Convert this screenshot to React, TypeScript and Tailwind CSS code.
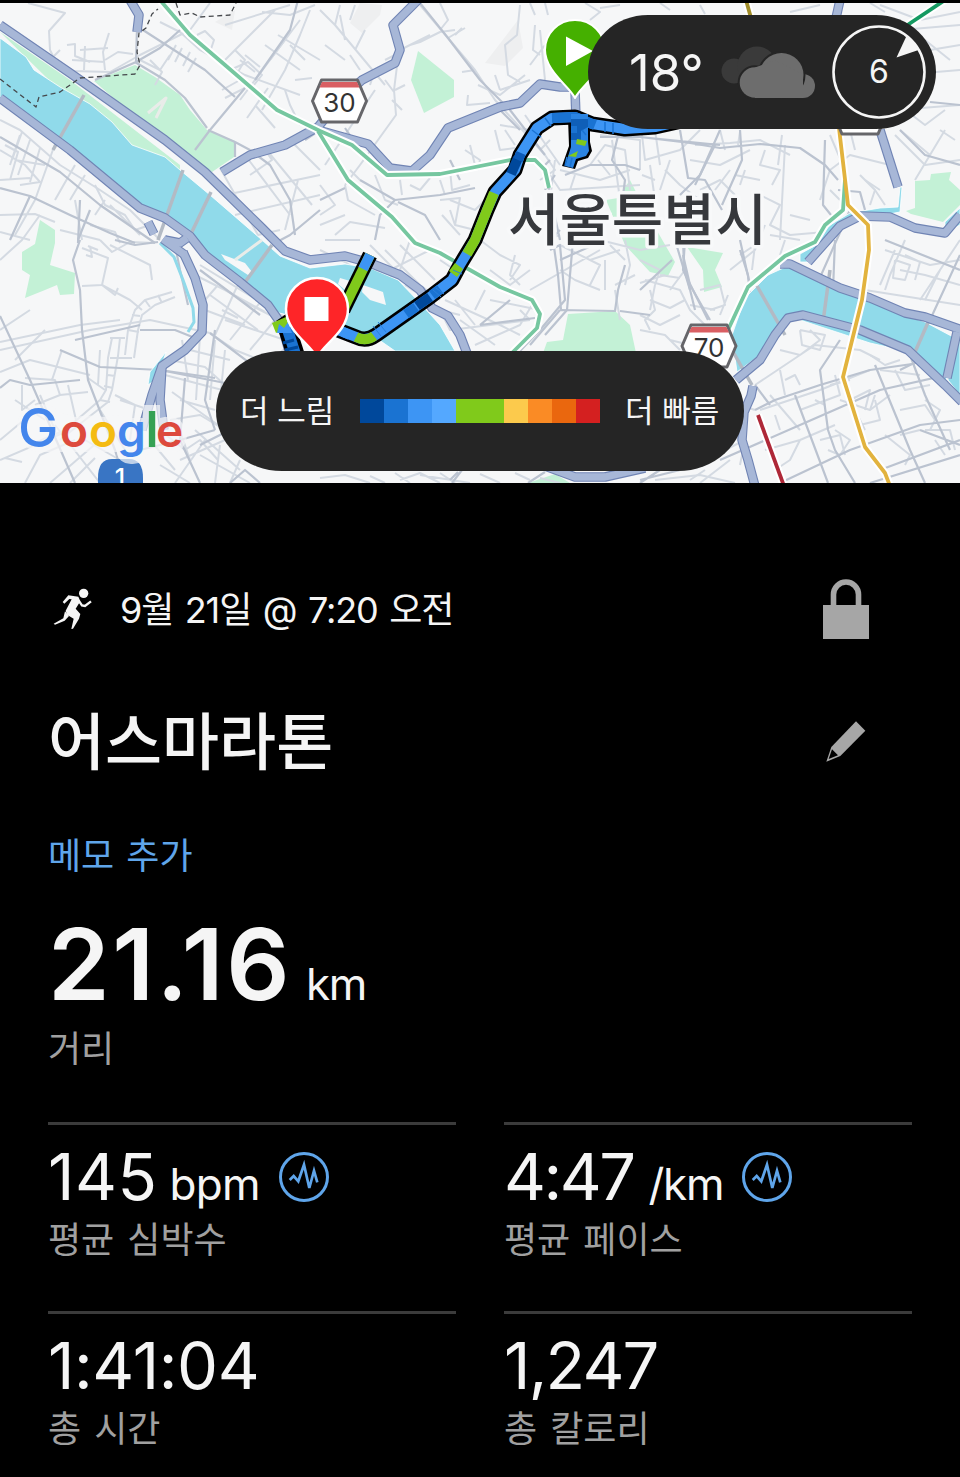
import React from 'react';

type Segment = { d: string; color: string };

type StatProps = {
  value: string;
  valueClass: string;
  unit?: string;
  unitClass?: string;
  label: string;
  chart?: boolean;
};

const MINOR_ROADS = [
  'M28 3L65 13L49 31L50 50L55 60L72 71L110 72L140 55L190 30L210 3',
  'M67 45L75 44L75 56L90 62M80 50L108 48M109 33L103 52L105 70M72 60L105 62M85 46L84 70M48 62L60 50M105 60L118 52L133 54',
  'M160 22L180 32L200 50L245 75L300 95M170 55L160 70L140 60M150 60L162 72L155 85M176 45L168 60M182 48L175 62M190 52L183 66M196 58L188 72',
  'M197 35L205 31L214 40L210 52M225 25L290 5M225 60L250 35L275 10M235 50L245 60L238 72M262 12L290 15L315 5M310 10L300 35L285 70L262 110M278 35L320 60',
  'M230 70L248 62L262 75L250 90M247 118L268 88M255 105L275 128M285 90L290 105L300 125M295 80L312 78M265 45L300 70M300 20L270 60L240 100',
  'M222 90L240 80M225 98L245 88M270 60L285 40M290 45L305 60M240 60L255 72M245 55L260 67',
  'M220 168L258 235L280 230M245 155L290 215M265 148L312 205M290 140L320 170M225 195L320 175M235 215L320 195M228 190L265 235M298 180L285 230M250 175L272 160L265 150',
  'M0 120L20 130L60 165L100 190L130 210L160 240M0 150L25 165L40 182L20 185M5 145L18 152L10 180M20 135L10 165M30 140L18 175M40 148L30 182M0 180L30 178M15 160L45 165M22 132L12 160',
  'M60 130L35 200L15 235M75 165L55 200M85 175L70 200M95 185L105 205L125 215L135 230L150 225M0 215L35 214L55 222M60 230L100 240M90 225L115 232L120 243M105 200L95 215M110 205L140 235',
  'M0 232L30 240M75 200L82 240M0 260L22 240L40 215M100 240L112 252L130 242L155 243M82 248L108 258L102 285L82 286M88 246L98 250M86 255L92 257L90 246',
  'M102 285L115 295L118 288M110 245L150 265L152 280M102 285L130 300L142 310M0 350L90 330L150 320L210 333M0 342L80 325L120 320',
  'M0 330L30 310M15 360L45 330M0 372L30 360L90 375M25 378L55 380L60 395L88 392M35 405L60 395M22 385L22 410L35 400M52 380L62 350M68 385L76 420M88 378L105 390M100 350L98 385',
  'M110 338L125 338M112 338L108 358L106 390L100 400L65 430L30 445M120 338L118 356L112 390L108 402L85 420L60 440M110 358L132 358M108 375L115 376M104 386L113 388M100 400L110 402',
  'M125 355L128 330L135 310L145 300L172 292M134 358L138 330L142 315L155 305L175 297M128 330L139 332M132 315L140 316M145 300L150 307M158 295L162 303',
  'M0 460L70 430M25 483L40 455L75 440M50 483L100 440M70 483L95 458M0 440L30 415M5 458L22 462M15 400L45 420M40 395L55 430M55 425L100 483',
  'M115 395L135 405L130 440M120 400L150 410M100 410L125 450M85 440L120 460',
  'M195 275L225 290L265 312M200 265L290 320L290 345L270 360M215 335L240 280M205 310L245 325M218 285L205 300M230 340L262 300M250 350L275 320M210 295L258 330M225 320L285 340M240 300L270 315M222 310L238 318',
  'M170 360L205 367L225 385M165 375L230 392M210 333L235 350L260 360M182 340L188 380M200 335L196 400M190 350L230 360M180 400L215 410M172 392L225 430M215 340L210 400M225 350L218 420',
  'M170 420L200 415L225 430M160 430L185 450L200 440L218 460M150 440L175 470M178 425L190 460M195 430L240 470M180 460L225 440M200 455L250 483M160 465L190 483M205 440L175 483M220 445L215 483M240 460L230 483',
  'M320 10L335 25L340 5M335 25L385 85M340 15L345 40M355 5L350 20M365 30L355 50M375 70L370 85M325 45L345 60M350 55L360 70',
  'M410 45L420 42L440 32L455 30M430 35L400 50M398 58L394 90L396 115L360 165L345 185M392 100L402 110M455 35L462 28M395 90L405 85M395 55L385 60M385 80L394 92',
  'M375 90L345 135L362 150M345 135L325 165M420 5L448 38L475 70L495 100L545 155M440 30L448 20L440 3M448 38L465 28M495 75L500 90M475 70L462 72M468 95L467 105L490 103',
  'M520 5L517 35L505 45L508 75L520 82M535 25L533 50L540 55M545 45L530 65M500 90L530 80M478 85L500 95L525 75M540 30L545 80',
  'M320 185L335 205L320 215M345 185L348 200L375 215M350 170L360 180M375 175L385 200L398 205M400 180L402 195M335 235L350 222L385 228M320 225L345 215M325 240L360 240',
  'M410 185L420 190L430 178M440 180L445 195M450 170L452 190L470 185M465 150L480 160L478 170M470 145L475 165M440 200L460 198L455 225L475 230M455 225L450 210M442 215L460 235M450 200L475 210L490 195',
  'M500 125L530 130L535 145M495 130L500 150L515 148M515 145L505 130M525 115L560 165M550 140L540 150M545 155L555 170L540 180',
  'M585 3L600 12L590 20M530 3L535 15M545 3L548 15M600 8L620 5M660 3L670 10M700 5L705 14',
  'M550 175L560 190L640 185M555 160L550 200M560 170L600 180L630 170M590 165L605 145L625 150L630 190M598 160L610 175M612 140L620 200M575 175L570 190M600 135L640 140L640 170',
  'M642 135L645 160L680 150L700 130M655 130L660 165M690 160L720 165L750 150M695 145L730 143L760 140L790 155M765 150L760 165L780 170L772 185M778 165L782 135M720 130L725 150M740 132L738 145',
  'M665 170L680 185L700 200M642 175L655 180M700 190L720 180L735 195M715 190L730 170M735 175L760 180M745 170L740 185M785 145L780 240M650 165L655 200M670 160L660 190',
  'M820 200L830 170L850 155L870 160L890 165M850 130L855 150M830 135L845 170M860 175L875 190L870 205M900 130L930 155L915 180M895 135L925 165L960 160M930 155L945 130M912 115L925 125L945 110M895 110L960 105M940 130L955 140',
  'M900 75L960 70M905 82L915 92L910 100M875 190L885 205M830 190L840 200M880 190L865 180M760 195L780 205L770 225L790 235L825 232',
  'M765 225L755 250L730 270M785 240L780 255M770 235L800 240M790 215L810 220M740 255L755 245L752 270M650 290L655 310L645 320L650 330',
  'M320 250L345 262L380 285L400 270M410 240L400 270L440 300M385 250L425 290M400 245L435 280M390 270L430 250M370 245L400 275M440 260L455 270',
  'M405 285L420 295L440 310L460 315M445 300L500 325L520 335M460 320L495 345M475 345L520 325L535 300M440 310L450 330L530 320M455 300L475 325M490 300L540 310M520 310L530 320M485 290L475 310',
  'M480 240L500 255L520 265L510 280M490 270L510 285L530 270M515 255L510 275L520 285M545 240L560 235M560 245L600 265L590 285M605 260L605 290M610 245L625 260M560 270L575 280L600 290M530 290L600 250',
  'M600 240L640 250L670 245M590 260L620 250M615 290L620 320M625 240L630 265L625 285M615 285L635 275',
  'M645 280L680 290L690 310L705 325M640 315L660 325L680 315M650 300L670 308L685 300M655 285L650 310M670 290L685 270M660 275L680 278M700 290L720 285L725 305L710 310M720 315L728 295',
  'M640 260L660 270L655 285M640 283L665 275M640 330L665 335L680 350M690 305L715 310M670 340L690 345',
  'M755 385L815 345L860 350L880 360M770 395L800 430M780 350L800 355L820 340L810 330M800 330L825 335L820 350L802 345L800 330M785 380L795 375L800 385M760 410L820 390L870 370M780 370L785 395',
  'M775 415L780 430M755 410L740 405M800 410L840 395L835 375M815 400L825 405M830 385L850 380M840 400L870 410L890 395M850 400L870 390L865 410M855 410L865 430',
  'M765 450L800 440L835 425M800 440L790 460L775 470M835 430L850 440L840 455L828 450M820 440L840 435L845 455M875 400L880 420L860 425M870 410L875 395M880 370L920 375M870 355L885 365L900 360',
  'M895 370L905 390L930 385M900 410L925 405L935 420M925 400L940 410L930 430M885 435L910 455L905 465M935 440L945 455M925 430L950 430L955 450M900 435L920 430M900 270L925 275L960 285M865 290L960 305',
  'M905 240L890 275L885 290M895 260L910 265L905 280L893 278L895 260M905 255L920 262L915 280M885 250L930 265L960 260M920 300L960 240M880 285L895 250M940 270L925 300',
  'M320 478L345 475L370 483M370 476L385 483M400 480L420 473L440 483M395 473L410 483M420 475L470 483M440 473L455 483M480 474L500 483M515 473L530 480M540 478L560 483M655 480L700 475L735 483',
  'M715 455L745 440L740 465M700 483L730 460M690 480L705 470M880 5L920 20L960 12M870 3L885 12M790 12L820 5M900 30L960 25M925 40L950 60M905 60L930 50L960 45',
];

const MAJOR_ROADS = [
  'M137 28L136 62L95 80M136 62L160 48L180 30M143 30L205 70L235 97M298 0L290 30L255 80M245 88L210 130L195 150M208 130L235 142L250 150',
  'M135 62L165 80L185 98L207 128M235 142L235 157',
  'M0 137L60 172L100 205L155 243M0 188L30 196L70 215L110 233L135 243M30 196L10 240M80 200L78 243M250 150L270 165L290 200L295 235M320 210L290 235L275 243',
  'M80 240L73 260L80 290L82 330L88 380L115 450L125 483M0 316L30 380L75 483M0 388L10 380L30 385L80 380M75 340L140 325M140 330L175 330L200 340',
  'M90 210L78 240M115 240L135 245L158 242M60 350L100 367L160 370L215 378M200 270L260 315M175 245L180 270L188 305M185 378L180 440L200 483M200 445L230 430',
  'M160 370L225 383M215 330L205 400L215 430M140 450L180 440L215 430M230 483L245 470L260 483',
  'M420 3L448 38L480 80L510 110L545 155M360 180L395 200L440 195L475 188M395 200L380 215L375 240M398 202L425 215L440 240M320 200L345 188',
  'M320 130L305 140M345 128L360 150L375 165M450 160L460 180M500 110L520 130',
  'M600 137L640 137L690 143L720 148L760 144L800 148L825 165L838 180M620 128L612 160L625 180L620 220M640 137L720 145M565 175L590 165L625 165L640 170M680 130L688 178L705 180L722 210M740 130L742 160L722 205M695 185L715 145',
  'M825 140L823 205L835 220M838 190L860 192L865 210M900 130L925 155L960 165M930 102L960 105M720 130L700 175L680 195',
  'M555 175L545 190M560 240L548 185M550 160L540 170M683 240L684 265L695 310M550 240L560 230M672 260L640 290',
  'M546 240L548 230M550 250L560 245L565 300L540 330L520 351M553 240L558 275L561 310M573 240L567 310L545 335M683 255L690 285L710 320M740 250L748 275L750 295M675 240L690 290',
  'M600 242L560 260M560 310L615 311L618 290L625 265M620 311L650 315M510 300L480 325M480 325L535 318M560 310L530 345',
  'M685 240L683 270L708 320M740 240L750 285M755 410L775 400L820 385L870 370L912 364L960 350M755 385L770 405M720 460L800 425L880 390L960 372',
  'M780 483L850 450L920 425L960 420M795 395L828 483M840 340L820 370L828 430L835 450L855 483M870 300L860 330M910 355L925 395L950 450M875 365L910 450L925 483M885 240L960 270M912 364L900 370M920 430L960 445M835 240L833 290L828 320',
  'M880 470L960 440M870 483L960 455M960 255L930 320L915 350M640 483L660 470M810 300L850 210M640 480L700 465',
  'M450 480L458 472M452 483L462 470M528 483L545 472M210 333L285 390',
];

const WATER = [
  'M0 38L26 57L34 70L60 87L90 104L112 122L132 145L165 157L180 170L210 195L262 240L280 256L310 268L345 264L370 268L398 280L420 303L440 325L455 351L395 351L372 335L345 330L318 322L275 312L230 278L192 240L140 205L70 150L0 98Z',
  'M737 372L732 335L745 298L768 275L790 265L830 283L860 297L905 315L925 322L955 338L946 380L910 352L870 343L800 320L788 316L775 335L760 355Z',
  'M955 345L960 340V395L948 380Z',
  'M815 242L830 225L850 213L880 208L898 207L900 187L902 187L900 212L862 219L835 232L818 250Z',
  'M158 362L150 372L148 385L158 378L166 352Z',
  'M800 254L818 244L812 262L800 262Z',
  'M945 222L960 208V225L945 232Z',
];

const STREAM = 'M160 243L174 257L183 280L193 308L194 322L188 332';

const PARKS = [
  'M0 32L70 80L180 165L180 172L100 130Z',
  'M94 81L135 65L155 77L180 95L190 110L207 130L235 141L234 157L212 172L198 165L150 130Z',
  'M418 51L454 80L454 97L424 113L411 80Z',
  'M915 181L930 180L931 174L951 172L949 180L960 190V205L943 222L911 214L906 211L915 208Z',
  'M35 244L40 220L55 230L55 243L50 265L75 273L74 294L60 295L57 285L45 290L25 298L30 275L22 270L22 252Z',
  'M606 200L618 198L630 180L640 200L660 236L675 262L668 276L650 272L625 245Z',
  'M687 247L723 253L715 270L722 287L704 292L703 270Z',
  'M568 314L615 311L630 325L636 353H543L547 342L563 340Z',
  'M528 483L555 474L570 483Z',
];

const HIGHWAYS = [
  'M0 25L70 73L90 87L165 140L205 172L262 228L285 251L310 260L345 256L370 263L400 275L420 290L432 308L448 316L460 335L468 356',
  'M0 98L70 150L140 208L165 218L190 236L205 255L240 282L268 305L282 325L290 355',
  'M130 0L139 15L137 32',
  'M183 252L195 278L203 305L202 332L185 350L162 366L152 395L142 430',
  'M162 366L160 400L164 430',
  'M163 239L185 255',
  'M148 222L154 234M165 240L180 243L187 238',
  'M418 0L393 25L400 50L395 63L362 80L340 100L318 127L285 145L250 155L222 172',
  'M318 130L368 144L390 168L412 171L430 155L448 128L500 107L520 103L540 84L560 87L575 87',
  'M840 0L836 18',
  'M880 130L898 187',
  'M808 262L840 226L860 216L890 217L915 228L945 233L960 215',
  'M780 264L790 264L840 288L870 298L905 313L925 317L962 330',
  'M736 380L760 360L775 335L788 318L803 315L860 330L908 350L945 385L962 402',
  'M957 332L947 378',
  'M753 386L751 396L744 412L742 440L748 460L755 486',
  'M545 466L575 477L605 477L645 468',
  'M575 90L576 118',
];

const BRIDGES = ['M84 95L53 150', 'M183 170L158 240', 'M211 192L188 240', 'M272 245L243 285', 'M757 286L785 335', 'M830 270L823 322', 'M930 318L915 352', 'M732 350L752 385'];

const TRANSIT_LINES: Segment[] = [
  { d: 'M160 0L190 35L225 65L277 110L320 131L352 145L387 175L440 174L510 160L535 160L545 170L549 188', color: '#76c7a0' },
  { d: 'M318 131L348 180L392 217L415 243L440 253L470 270L500 287L532 300L540 314L537 328L512 353', color: '#76c7a0' },
  { d: 'M845 180L843 210L825 225L815 242L785 256L748 287L728 330', color: '#76c7a0' },
  { d: 'M945 0L900 30', color: '#159a62' },
  { d: 'M746 0L751 18', color: '#a08c28' },
  { d: 'M839 128L848 205L868 225L869 250L862 300L843 377L865 447L885 473L890 486', color: '#e2b33e' },
  { d: 'M758 415L784 486', color: '#ae2838' },
];

const ROUTE =
  'M682 121L655 127L625 129L592 124L575 117L552 118L537 128L520 155L515 170L495 192L487 210L475 240L460 265L452 280L430 297L376 335Q366 342 356 337L338 330';

const ROUTE_SEGMENTS: Segment[] = [
  { d: 'M595 125L575 117L552 118', color: '#1a73d2' },
  { d: 'M518 158L511 174', color: '#00489b' },
  { d: 'M521 153L518 160', color: '#0c5bb8' },
  { d: 'M494 193L487 210L475 240L467 254', color: '#80ca1b' },
  { d: 'M459 266L453 274', color: '#80ca1b' },
  { d: 'M440 289L432 295', color: '#1a73d2' },
  { d: 'M430 297L417 306', color: '#00489b' },
  { d: 'M416 307L406 314', color: '#1a73d2' },
  { d: 'M374 336Q366 342 356 337', color: '#80ca1b' },
];

const PACE_SCALE = [
  'bg-[#00489b]',
  'bg-[#1a73d2]',
  'bg-[#3d95f4]',
  'bg-[#54a8ff]',
  'bg-[#80ca1b]',
  'bg-[#80ca1b]',
  'bg-[#fcca4c]',
  'bg-[#fa8b25]',
  'bg-[#ea670e]',
  'bg-[#d42020]',
];

function RoadShield({ x, y, label }: { x: number; y: number; label?: string }) {
  return (
    <g transform={`translate(${x} ${y})`}>
      <path d="M-27 0L-18 -21H18L27 0L18 21H-18Z" fill="#fff" stroke="#66666a" strokeWidth="3" strokeLinejoin="round" />
      <path d="M-17.5 -19H17.5L20 -13.500H-20Z" fill="#d95f63" />
      {label && (
        <text y="10.500" textAnchor="middle" fontSize="26" fill="#333" fontFamily="Inter, sans-serif">
          {label}
        </text>
      )}
    </g>
  );
}

function RouteMap() {
  return (
    <svg viewBox="0 3 960 480" className="block h-full w-full" fill="none" strokeLinejoin="round">
      <rect width="960" height="490" fill="#f6f7f8" />
      <path d="M350 23L360 3L382 5L380 15L362 33Z M485 63L518 20L523 48L505 66Z M215 22L235 10L232 30Z" fill="#eeeff0" />
      {PARKS.map(d => (
        <path key={d} d={d} fill="#c3f1d6" />
      ))}
      <g stroke="#d4dae2" strokeWidth="2">
        {MINOR_ROADS.map(d => (
          <path key={d} d={d} />
        ))}
      </g>
      <g stroke="#bbc3d0" strokeWidth="2.200">
        {MAJOR_ROADS.map(d => (
          <path key={d} d={d} />
        ))}
      </g>
      {WATER.map(d => (
        <path key={d} d={d} fill="#90daea" stroke="#fff" strokeWidth="0.800" />
      ))}
      <path d="M363 285L383 292L386 305L370 300L362 292Z M221 254L245 263L252 272L248 275L225 260Z M340 278L350 281L345 290L338 284Z" fill="#f6f7f8" />
      <path d={STREAM} stroke="#90daea" strokeWidth="3" />
      <path d="M235 260L262 240M148 113L166 98L156 118" stroke="#e9ece9" strokeWidth="3" />
      {BRIDGES.map(d => (
        <path key={d} d={d} stroke="#b3bac4" strokeWidth="3.500" />
      ))}
      {HIGHWAYS.map(d => (
        <path key={d} d={d} stroke="#7084b4" strokeWidth="9.500" />
      ))}
      {HIGHWAYS.map(d => (
        <path key={d} d={d} stroke="#a7b7d7" strokeWidth="7.300" />
      ))}
      <path d="M0 79L36 107L39 97L60 92L80 78L135 74L140 65L137 52L139 33L146 28L152 14L158 9M176 3L180 15L192 13L200 17L230 15L236 3" stroke="#45484c" strokeWidth="1.300" strokeDasharray="5 3.500" />
      {TRANSIT_LINES.map(({ d }) => (
        <path key={d} d={d} stroke="#fff" strokeWidth="8" />
      ))}
      {TRANSIT_LINES.map(({ d, color }) => (
        <path key={d} d={d} stroke={color} strokeWidth="3.800" />
      ))}
      <RoadShield x={339.5} y={101} label="30" />
      <RoadShield x={709} y={346} label="70" />
      <RoadShield x={860} y={113} />

      <text
        x="508"
        y="240"
        fontSize="56"
        fontWeight="500"
        textLength="259"
        fill="#36383c"
        stroke="#f8f9fa"
        strokeWidth="7"
        paintOrder="stroke"
        fontFamily="'Noto Sans CJK KR', sans-serif"
      >
        서울특별시
      </text>

      {/* recorded track, coloured by pace */}
      <path d={ROUTE} stroke="#000" strokeWidth="15" />
      <path d="M370 255L343 310" stroke="#000" strokeWidth="15" />
      <path d="M568 118H590V142L592 151L588 158L578 161L575 169L562 166L569 146Z" fill="#000" />
      <path d={ROUTE} stroke="#3d95f4" strokeWidth="10" />
      {ROUTE_SEGMENTS.map(({ d, color }) => (
        <path key={d} d={d} stroke={color} strokeWidth="10" />
      ))}
      <path d="M571 114H588V142L589 151L586 156L576 159L573 168L565 166L571 147Z" fill="#2b84e2" />
      <path d="M571 119H588V127L581 131V140H571Z" fill="#0f5fb8" />
      <path d="M571 126H577V133H571Z" fill="#1a73d2" />
      <path d="M577 139L587 141L585 146L576 144Z M568 156L578 151L576 157Z" fill="#80ca1b" />
      <path d="M567 157L565 166M572 158L570 167M553 113V122M559 113V122M582 130L586 135M605 122V132M613 123V134M545 118L551 126M532 130L541 137" stroke="#1a73d2" strokeWidth="1.500" />
      <path d="M436 288L444 294M433 290L441 297M373 326L381 336M378 322L386 332M453 270L462 274" stroke="#2b80dc" strokeWidth="1" />
      <path d="M370 255L343 310" stroke="#80ca1b" strokeWidth="10" />
      <path d="M370 255L363 269" stroke="#3d95f4" strokeWidth="10" />
      <path d="M350 335L343 332" stroke="#3d95f4" strokeWidth="10" />
      <path d="M287 328L296 356" stroke="#000" strokeWidth="18" />
      <path d="M287 328L296 356" stroke="#1a73d2" strokeWidth="11" />
      <path d="M283 343L294 340M285 350L298 347" stroke="#00489b" strokeWidth="3" />
      <path d="M276 321L286 314V324Z" fill="#000" />
      <path d="M272 323L286 317L289 327L276 333Z" fill="#80ca1b" />
      <path d="M277 333L279 324L284 328L288 322L292 333Z" fill="#3d95f4" />

      <path d="M575 98C570 87 545 71 545 50A30 30 0 0 1 605 50C605 71 580 87 575 98Z" fill="#45b000" stroke="#fff" strokeWidth="2" />
      <path d="M566 36.500V66L593 51Z" fill="#fff" />
      <path d="M317 358C312 345 286 332 286 309A31 31 0 0 1 348 309C348 332 322 345 317 358Z" fill="#fe2528" stroke="#fff" strokeWidth="2.500" />
      <path d="M304.500 297H328.500V321H304.500Z" fill="#fff" />

      <path d="M98 490V478Q98 459 112 459H129Q143 459 143 478V490Z" fill="#3975c4" />
      <text x="120" y="487" textAnchor="middle" fontSize="25" fontWeight="500" fill="#fff" fontFamily="Inter, sans-serif">
        1
      </text>

      {/* pale halo that keeps the wordmark readable over roads */}
      <path
        d="M41 404A25 25 0 0 1 60 413Q68 415 75 417Q90 414 104 417Q118 414 132 418H143V405H160V418Q182 412 187 434Q186 453 170 452H149Q144 465 131 464Q118 463 117 452H41A24 24 0 0 1 41 404Z"
        fill="#f6f7f8"
        fillOpacity="0.700"
      />
      <text y="447" fontSize="46" fontWeight="600" fontFamily="Inter, sans-serif">
        <tspan x="18" fontSize="54" fontWeight="500" fill="#4486ec">G</tspan>
        <tspan x="60" fill="#dd4a3d">o</tspan>
        <tspan x="89" fill="#f4bb12">o</tspan>
        <tspan x="117" fill="#4486ec">g</tspan>
        <tspan x="145.500" fontSize="50" fill="#35a154">l</tspan>
        <tspan x="156" fill="#dd4a3d">e</tspan>
      </text>
    </svg>
  );
}

function CloudIcon() {
  return (
    <svg viewBox="720 44 96 56" className="h-14 w-24">
      <g fill="#3a3a3a">
        <circle cx="734" cy="71" r="12.500" />
        <circle cx="757" cy="66" r="19.500" />
      </g>
      <g fill="#6d6d6d" stroke="#252525" strokeWidth="4" paintOrder="stroke">
        <circle cx="755" cy="82.500" r="15.300" />
        <circle cx="803" cy="86" r="12" />
        <circle cx="781.500" cy="75" r="22" />
      </g>
      <path d="M755 67.500L775 60L803 74.500V98H755Z" fill="#6d6d6d" />
    </svg>
  );
}

function WindCompass() {
  return (
    <div className="relative ml-[16px] h-[94px] w-[94px]">
      <svg viewBox="832 25 94 94" className="h-full w-full">
        <circle cx="879" cy="72" r="45.500" fill="none" stroke="#f5f5f5" strokeWidth="2.600" />
        <path d="M906.500 36L896.500 57.500L918.500 50Q913 41 906.500 36Z" fill="#f5f5f5" />
      </svg>
      <span className="absolute inset-0 flex items-center justify-center text-[32px] leading-none">6</span>
    </div>
  );
}

function WeatherPill() {
  return (
    <div className="absolute top-3 right-6 flex h-[114px] w-[348px] items-center rounded-[60px/57px] bg-[#252525] pl-[41px] text-[#f5f5f5]">
      <span className="w-[91px] text-[51px] leading-none">18°</span>
      <CloudIcon />
      <WindCompass />
    </div>
  );
}

function PaceLegend() {
  return (
    <div className="absolute top-[348px] left-[216px] flex h-[120px] w-[528px] items-center justify-center gap-[25px] rounded-[66px/60px] bg-[#252525] text-[31px] text-[#f5f5f5]">
      <span className="w-[95px] whitespace-nowrap">더 느림</span>
      <div className="flex h-6">
        {PACE_SCALE.map((color, i) => (
          <span key={i} className={`w-6 ${color}`} />
        ))}
      </div>
      <span className="w-[95px] whitespace-nowrap">더 빠름</span>
    </div>
  );
}

function RunnerIcon() {
  return (
    <svg viewBox="70 84 120 126" className="h-[42px] w-10" fill="none" stroke="#f5f5f5">
      <circle cx="162" cy="100" r="14" fill="#f5f5f5" stroke="none" />
      <path d="M116 106L146 110L152 124L138 146L152 162L148 176L130 206L125 207L132 176L112 164L108 152L126 118L119 117L104 131L99 126Z" fill="#f5f5f5" stroke="none" />
      <path d="M147 122L157 136L166 138L184 124" strokeWidth="7" />
      <path d="M106 154L118 168L105 182L76 194L72 191L101 175Z" fill="#f5f5f5" stroke="none" />
    </svg>
  );
}

function LockIcon() {
  return (
    <svg viewBox="0 0 46 60" className="h-[60px] w-[46px]" fill="none">
      <path d="M10.500 30V15.500A12.500 12.500 0 0 1 35.500 15.500V30" stroke="#a6a6a6" strokeWidth="5.600" />
      <path d="M0 26H46V60H0Z" fill="#a6a6a6" />
    </svg>
  );
}

function PencilIcon() {
  return (
    <svg viewBox="79 483 120 123" className="mb-0.5 h-[41px] w-10">
      <path d="M169 484L197 512L122 588L80 605L95 561Z" fill="#a6a6a6" />
      <path d="M97 568L115 586L87 597Z" fill="#000" />
    </svg>
  );
}

function ChartBadge() {
  return (
    <svg viewBox="0 0 50 50" className="mt-1 ml-[19px] h-[50px] w-[50px] self-start" fill="none" stroke="#5fa5ea">
      <circle cx="25" cy="25" r="23.500" strokeWidth="3" />
      <path d="M10.700 28L14.700 24L19.300 29.300L25 12.700L30.300 36L35 18.700L38.300 30.300" strokeWidth="2.700" />
    </svg>
  );
}

function Stat({ value, valueClass, unit, unitClass, label, chart }: StatProps) {
  return (
    <div className="h-[189px] border-t-[3px] border-[#3b3b3b] pt-[23px]">
      <div className="flex h-[58px] items-baseline">
        <span className={`text-[65px] leading-[58px] ${valueClass}`}>{value}</span>
        {unit && <span className={`text-[44px] leading-[58px] ${unitClass}`}>{unit}</span>}
        {chart && <ChartBadge />}
      </div>
      <p className="mt-[9px] text-[36px] leading-[50px] text-[#a0a0a0] [word-spacing:3px]">{label}</p>
    </div>
  );
}

export default function App() {
  return (
    <main className="h-[1477px] w-[960px] overflow-hidden bg-black pt-[3px] font-[Inter,'Noto_Sans_CJK_KR',sans-serif] text-[#f5f5f5]">
      <section className="relative h-[480px] overflow-hidden">
        <RouteMap />
        <WeatherPill />
        <PaceLegend />
      </section>

      <section className="px-12 pt-24">
        <div className="flex h-[60px] items-center pr-[43px] pl-[5px]">
          <RunnerIcon />
          <p className="ml-[27px] flex-1 pt-0.5 text-[36px] leading-none tracking-[-1.1px] [word-spacing:2.500px]">
            9월 21일 @ 7:20 오전
          </p>
          <LockIcon />
        </div>

        <div className="mt-[62px] flex h-[82px] items-center justify-between pr-[46px]">
          <h1 className="pt-0.5 text-[62px] leading-none font-medium">어스마라톤</h1>
          <PencilIcon />
        </div>

        <button className="mt-[46px] block h-[54px] text-[36px] leading-[54px] text-[#5fa5ea] [word-spacing:2px]">
          메모 추가
        </button>

        <div className="mt-9 flex h-[90px] items-baseline">
          <span className="text-[99px] leading-[90px] font-semibold tracking-[2.5px]">21.16</span>
          <span className="ml-[14px] text-[44px] leading-none tracking-[-1.3px]">km</span>
        </div>
        <p className="mt-[15px] text-[36px] leading-[50px] text-[#a0a0a0]">거리</p>

        <div className="mt-12 grid grid-cols-2 gap-x-12">
          <Stat value="145" valueClass="tracking-[0.5px]" unit="bpm" unitClass="ml-3 tracking-[-0.7px]" label="평균 심박수" chart />
          <Stat value="4:47" valueClass="tracking-[-2.5px]" unit="/km" unitClass="ml-[15px] tracking-[-1.3px]" label="평균 페이스" chart />
          <Stat value="1:41:04" valueClass="tracking-[-0.4px]" label="총 시간" />
          <Stat value="1,247" valueClass="tracking-[-1.8px]" label="총 칼로리" />
        </div>
      </section>
    </main>
  );
}
